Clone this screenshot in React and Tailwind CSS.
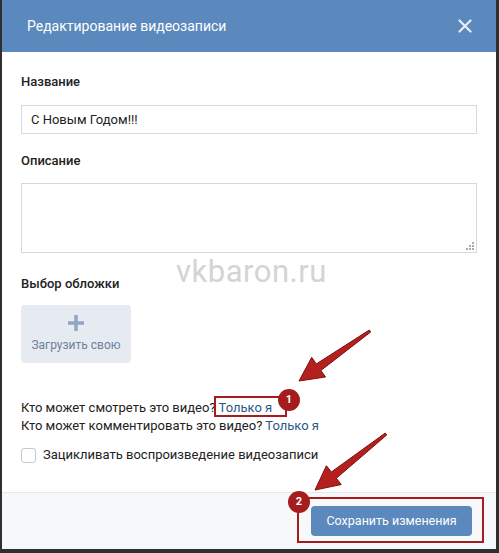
import React from "react";

function Arrow({ x1, y1, x2, y2 }) {
  const dx = x2 - x1, dy = y2 - y1;
  const len = Math.hypot(dx, dy);
  const ux = dx / len, uy = dy / len;
  const px = -uy, py = ux;
  const headLen = 24, headW = 12, shaftW = 4, tailW = 1.2;
  const bx = x2 - ux * headLen, by = y2 - uy * headLen;
  const pts = [
    [x1 + px * tailW, y1 + py * tailW],
    [bx + px * shaftW, by + py * shaftW],
    [bx + px * headW, by + py * headW],
    [x2, y2],
    [bx - px * headW, by - py * headW],
    [bx - px * shaftW, by - py * shaftW],
    [x1 - px * tailW, y1 - py * tailW],
  ];
  return (
    <polygon
      points={pts.map((p) => p.join(",")).join(" ")}
      fill="#b3201e"
      stroke="#7d1010"
      strokeWidth="1"
      strokeLinejoin="round"
    />
  );
}

export default function App() {
  return (
    <div
      className="relative w-[499px] h-[553px] bg-[#2f2f2f] pl-[2px] pr-[3px] pb-[4px] overflow-hidden"
      style={{ fontFamily: "Roboto, 'Liberation Sans', sans-serif" }}
    >
      <div className="w-full h-full bg-white flex flex-col">
        <div className="h-[52px] bg-[#5b88bd] flex items-center justify-between pl-[25px] pr-[24px] shrink-0">
          <span className="text-white text-[14px]">Редактирование видеозаписи</span>
          <svg width="14" height="14" viewBox="0 0 14 14">
            <path d="M1.5 1.5 L12.5 12.5 M12.5 1.5 L1.5 12.5" stroke="#e8eef6" strokeWidth="2.2" strokeLinecap="round" />
          </svg>
        </div>

        <div className="flex-1 px-[19px] pt-[21px] flex flex-col text-[#222]">
          <div className="text-[13px] font-medium leading-[18px]">Название</div>
          <div className="mt-[14px] h-[29px] border border-[#d3d9de] flex items-center px-[9px] text-[13px]">
            С Новым Годом!!!
          </div>
          <div className="mt-[18px] text-[13px] font-medium leading-[18px]">Описание</div>
          <div className="mt-[13px] h-[70px] border border-[#d3d9de] relative">
            <div className="absolute right-[2px] bottom-[2px] grid grid-cols-3 gap-[1px]">
              <span className="w-[2px] h-[2px]"></span>
              <span className="w-[2px] h-[2px]"></span>
              <span className="w-[2px] h-[2px] bg-[#aaa]"></span>
              <span className="w-[2px] h-[2px]"></span>
              <span className="w-[2px] h-[2px] bg-[#aaa]"></span>
              <span className="w-[2px] h-[2px] bg-[#aaa]"></span>
              <span className="w-[2px] h-[2px] bg-[#aaa]"></span>
              <span className="w-[2px] h-[2px] bg-[#aaa]"></span>
              <span className="w-[2px] h-[2px] bg-[#aaa]"></span>
            </div>
          </div>
          <div className="mt-[22px] text-[13px] font-medium leading-[18px]">Выбор обложки</div>
          <div className="mt-[12px] w-[110px] h-[58px] bg-[#e5ebf1] rounded-[4px] flex flex-col items-center justify-center">
            <svg width="16" height="16" viewBox="0 0 16 16">
              <path d="M8 0 V16 M0 8 H16" stroke="#8fa7c2" strokeWidth="3.5" />
            </svg>
            <span className="mt-[5px] text-[12px] text-[#6f819a]">Загрузить свою</span>
          </div>

          <div className="mt-[36px] text-[13px] leading-[18px]">
            Кто может смотреть это видео? <span className="text-[#2a5885]">Только я</span>
          </div>
          <div className="text-[13px] leading-[18px]">
            Кто может комментировать это видео? <span className="text-[#2a5885]">Только я</span>
          </div>
          <div className="mt-[11px] flex items-center h-[18px]">
            <span className="w-[15px] h-[15px] border border-[#c1c9d1] rounded-[3px] bg-white"></span>
            <span className="ml-[7px] text-[13px]">Зацикливать воспроизведение видеозаписи</span>
          </div>
        </div>

        <div className="h-[57px] shrink-0 border-t border-[#e7e8ec] bg-[#f7f8fa] flex items-center justify-end pr-[24px]">
          <div className="h-[30px] w-[161px] bg-[#5b88bd] rounded-[4px] flex items-center justify-center text-white text-[12.5px]">
            Сохранить изменения
          </div>
        </div>
      </div>

      {/* watermark */}
      <div className="absolute left-[176px] top-[256px] text-[31px] text-[#d4d4d4] tracking-[0.5px] leading-none">
        vkbaron.ru
      </div>

      {/* annotations */}
      <div className="absolute left-[214px] top-[396px] w-[73px] h-[21px] border-2 border-[#a51c1c]"></div>
      <div className="absolute left-[297px] top-[497px] w-[187px] h-[46px] border-2 border-[#a51c1c]"></div>
      <svg className="absolute left-0 top-0" width="499" height="553">
        <Arrow x1={370} y1={331} x2={299} y2={381} />
        <Arrow x1={386} y1={434} x2={315} y2={490} />
      </svg>
      <div className="absolute left-[278px] top-[389px] w-[22px] h-[22px] rounded-full bg-[#a51c1c] flex items-center justify-center text-white text-[11px] font-bold">
        1
      </div>
      <div className="absolute left-[288px] top-[491px] w-[22px] h-[22px] rounded-full bg-[#a51c1c] flex items-center justify-center text-white text-[11px] font-bold">
        2
      </div>
    </div>
  );
}
